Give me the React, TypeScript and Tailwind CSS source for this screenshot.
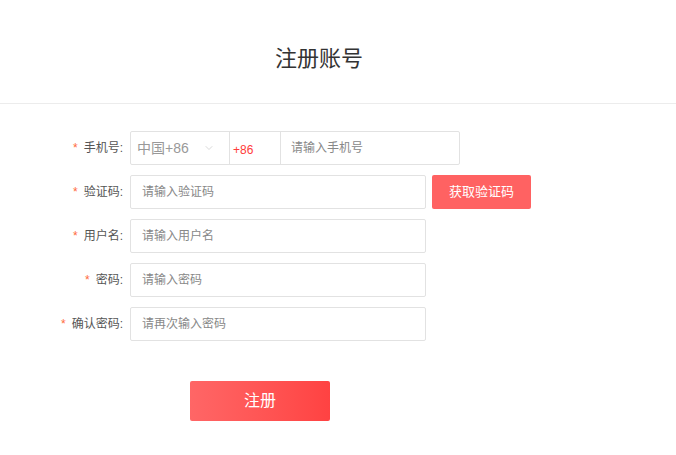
import { ChevronDown } from "lucide-react";

const font = { fontFamily: '"Liberation Sans", "Noto Sans CJK SC", sans-serif' };

const Label = ({ text }: { text: string }) => (
  <div className="w-[130px] shrink-0 pr-[7px] text-right text-[12px] text-[#555]">
    <span className="mr-[6px] text-[#ff6a3c]">*</span>
    {text}:
  </div>
);

const Field = ({ placeholder, className = "w-[296px]" }: { placeholder: string; className?: string }) => (
  <input
    placeholder={placeholder}
    className={`${className} h-[34px] rounded-[2px] border border-[#e2e2e2] px-[11px] text-[12px] text-[#333] outline-none placeholder:text-[#888]`}
  />
);

export default function App() {
  return (
    <div className="min-h-screen w-full bg-white" style={font}>
      <div className="flex h-[104px] items-center justify-center border-b border-[#ececec] pr-[38px] pt-[14px]">
        <h1 className="text-[22px] text-[#333]">注册账号</h1>
      </div>

      <div className="flex flex-col gap-[10px] pt-[27px]">
        <div className="flex items-center">
          <Label text="手机号" />
          <div className="flex h-[34px] w-[330px] rounded-[2px] border border-[#e2e2e2]">
            <div className="flex w-[99px] items-center justify-between border-r border-[#e2e2e2] pl-[6px] pr-[14px] text-[14px] text-[#999]">
              <span>中国+86</span>
              <ChevronDown className="h-[12px] w-[12px] text-[#c0c0c0]" strokeWidth={1.2} />
            </div>
            <div className="flex w-[51px] items-center border-r border-[#e2e2e2] pl-[3px] pt-[3px] text-[12px] text-[#ff3b3b]">
              +86
            </div>
            <input
              placeholder="请输入手机号"
              className="min-w-0 flex-1 px-[10px] text-[12px] outline-none placeholder:text-[#888]"
            />
          </div>
        </div>

        <div className="flex items-center">
          <Label text="验证码" />
          <Field placeholder="请输入验证码" />
          <button className="ml-[6px] h-[34px] w-[99px] rounded-[2px] bg-[#ff6262] text-[13px] text-white">
            获取验证码
          </button>
        </div>

        <div className="flex items-center">
          <Label text="用户名" />
          <Field placeholder="请输入用户名" />
        </div>

        <div className="flex items-center">
          <Label text="密码" />
          <Field placeholder="请输入密码" />
        </div>

        <div className="flex items-center">
          <Label text="确认密码" />
          <Field placeholder="请再次输入密码" />
        </div>

        <div className="pl-[190px] pt-[30px]">
          <button className="h-[40px] w-[140px] rounded-[2px] bg-gradient-to-r from-[#ff6666] to-[#ff4242] text-[16px] text-white">
            注册
          </button>
        </div>
      </div>
    </div>
  );
}
